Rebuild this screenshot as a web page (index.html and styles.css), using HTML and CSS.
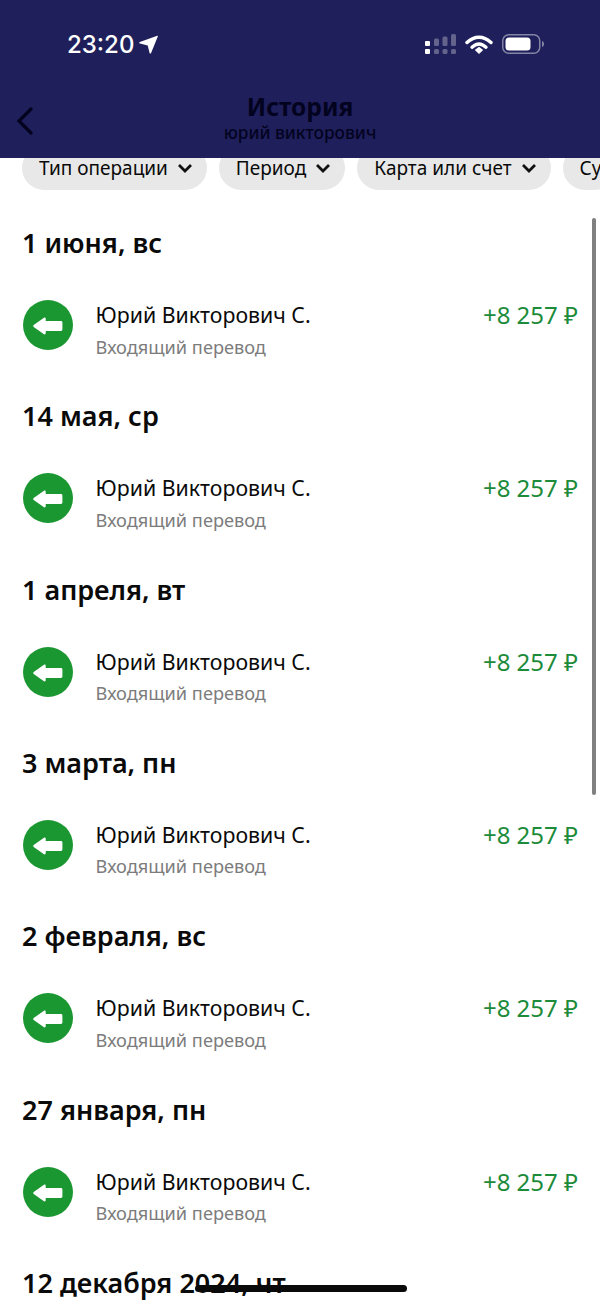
FILE: index.html
```html
<!DOCTYPE html>
<html lang="ru">
<head>
    <meta charset="UTF-8">
    <meta name="viewport" content="width=device-width, initial-scale=1.0">
    <title>История</title>
    <link rel="stylesheet" href="styles.css">
</head>
<body>
    <svg class="sprite" width="0" height="0">
        <symbol id="income" viewBox="0 0 50 50">
            <circle cx="25" cy="25" r="25" fill="#1b9732"/>
            <path d="M11 24.700 21 17.800c.8-.5 1.700 0 1.700.9v2.300h15.300c.8 0 1.400.6 1.400 1.400v7.200c0 .8-.6 1.400-1.400 1.400H22.700v2.300c0 .9-.9 1.400-1.700.9L11 27.300c-1-.7-1-1.900 0-2.600z" fill="#fff"/>
        </symbol>
        <symbol id="chevron" viewBox="0 0 14 9">
            <path d="m1 1 6 6 6-6" fill="none" stroke="#111" stroke-width="2.800"/>
        </symbol>
    </svg>
    <header class="top">
        <div class="status">
            <div class="clock">
                <span>23:20</span>
                <svg width="19" height="19" viewBox="0 0 19 19"><path d="M18.300.8c.4-.2.700.1.600.5L12.100 18c-.3.700-1.300.7-1.500 0L8.700 10.400.9 8.500C.1 8.300 0 7.300.8 7z" fill="#fff"/></svg>
            </div>
            <div class="status-icons">
                <svg width="31" height="21" viewBox="0 0 31 21">
                    <g fill="#fff">
                        <rect x="0" y="7" width="5" height="5" rx="1"/>
                        <rect x="0" y="15" width="5" height="5" rx="1"/>
                    </g>
                    <g fill="#fff" opacity=".3">
                        <rect x="9" y="4.500" width="5" height="7.500" rx="1.500"/>
                        <rect x="17.500" y="2.500" width="5" height="9.500" rx="1.500"/>
                        <rect x="26" y="0" width="5" height="12" rx="1.500"/>
                        <rect x="9" y="15" width="5" height="5" rx="1.500"/>
                        <rect x="17.500" y="15" width="5" height="5" rx="1.500"/>
                        <rect x="26" y="15" width="5" height="5" rx="1.500"/>
                    </g>
                </svg>
                <svg width="28" height="20" viewBox="0 0 28 20">
                    <path d="M2 8.500C9.500 1.500 18.500 1.500 26 8.500" fill="none" stroke="#fff" stroke-width="3.400" stroke-linecap="round"/>
                    <path d="M7 13.200C11.500 9 16.500 9 21 13.200" fill="none" stroke="#fff" stroke-width="3.400" stroke-linecap="round"/>
                    <path d="M9.800 16 14 12.800 18.200 16 14 20z" fill="#fff"/>
                </svg>
                <svg width="42" height="20" viewBox="0 0 42 20">
                    <rect x=".75" y=".75" width="37" height="18.500" rx="6" fill="none" stroke="#fff" stroke-opacity=".45" stroke-width="1.500"/>
                    <rect x="3.500" y="3.500" width="25" height="13" rx="3.500" fill="#fff"/>
                    <path d="M40 7c1.300.4 2 1.500 2 3s-.7 2.600-2 3z" fill="#fff" fill-opacity=".45"/>
                </svg>
            </div>
        </div>
        <div class="nav">
            <svg class="back" width="17" height="28" viewBox="0 0 17 28"><path d="M15 2 3 14l12 12" fill="none" stroke="#03031f" stroke-width="3.200" stroke-linecap="round"/></svg>
            <h1>История</h1>
            <p>юрий викторович</p>
        </div>
    </header>

    <div class="chips">
        <div class="chip">Тип операции <svg width="14" height="9"><use href="#chevron"/></svg></div>
        <div class="chip">Период <svg width="14" height="9"><use href="#chevron"/></svg></div>
        <div class="chip">Карта или счет <svg width="14" height="9"><use href="#chevron"/></svg></div>
        <div class="chip">Су</div>
    </div>

    <main class="list">
        <section class="day">
            <h2>1 июня, вс</h2>
            <div class="op">
                <svg class="op-icon" width="50" height="50"><use href="#income"/></svg>
                <div class="op-text"><div class="op-name">Юрий Викторович С.</div><div class="op-type">Входящий перевод</div></div>
                <div class="op-sum">+8 257 ₽</div>
            </div>
        </section>
        <section class="day">
            <h2>14 мая, ср</h2>
            <div class="op">
                <svg class="op-icon" width="50" height="50"><use href="#income"/></svg>
                <div class="op-text"><div class="op-name">Юрий Викторович С.</div><div class="op-type">Входящий перевод</div></div>
                <div class="op-sum">+8 257 ₽</div>
            </div>
        </section>
        <section class="day">
            <h2>1 апреля, вт</h2>
            <div class="op">
                <svg class="op-icon" width="50" height="50"><use href="#income"/></svg>
                <div class="op-text"><div class="op-name">Юрий Викторович С.</div><div class="op-type">Входящий перевод</div></div>
                <div class="op-sum">+8 257 ₽</div>
            </div>
        </section>
        <section class="day">
            <h2>3 марта, пн</h2>
            <div class="op">
                <svg class="op-icon" width="50" height="50"><use href="#income"/></svg>
                <div class="op-text"><div class="op-name">Юрий Викторович С.</div><div class="op-type">Входящий перевод</div></div>
                <div class="op-sum">+8 257 ₽</div>
            </div>
        </section>
        <section class="day">
            <h2>2 февраля, вс</h2>
            <div class="op">
                <svg class="op-icon" width="50" height="50"><use href="#income"/></svg>
                <div class="op-text"><div class="op-name">Юрий Викторович С.</div><div class="op-type">Входящий перевод</div></div>
                <div class="op-sum">+8 257 ₽</div>
            </div>
        </section>
        <section class="day">
            <h2>27 января, пн</h2>
            <div class="op">
                <svg class="op-icon" width="50" height="50"><use href="#income"/></svg>
                <div class="op-text"><div class="op-name">Юрий Викторович С.</div><div class="op-type">Входящий перевод</div></div>
                <div class="op-sum">+8 257 ₽</div>
            </div>
        </section>
        <section class="day day-last">
            <h2>12 декабря 2024, чт</h2>
        </section>
    </main>

    <div class="scrollbar"></div>
    <div class="home-bar"></div>
</body>
</html>
```

FILE: styles.css
```css
html, body {
    height: 100%;
}
body {
    margin: 0;
    overflow: hidden;
    background-color: #fff;
    color: #0a0a0a;
    font-family: "Noto Sans", "Open Sans", sans-serif;
}
.sprite {
    display: block;
    height: 0;
}
.top {
    position: relative;
    z-index: 1;
    height: 158px;
    background-color: #1f1f5b;
}
.status {
    display: flex;
    justify-content: space-between;
    align-items: center;
    height: 30px;
    padding: 29px 56px 0 67px;
}
.clock {
    display: flex;
    align-items: center;
    gap: 5px;
    color: #fff;
    font-family: Inter, sans-serif;
    font-size: 24px;
    font-weight: 500;
}
.status-icons {
    display: flex;
    align-items: center;
    gap: 9px;
}
.nav {
    position: relative;
    padding-top: 34px;
    text-align: center;
    color: #03031f;
}
.nav h1 {
    margin: 0;
    font-size: 24.500px;
    line-height: 28px;
    font-weight: 700;
}
.nav p {
    margin: 0;
    font-size: 17.300px;
    line-height: 24px;
    font-weight: 500;
}
.back {
    position: absolute;
    left: 16px;
    top: 48px;
}
.chips {
    display: flex;
    gap: 12px;
    margin-top: -12px;
    padding-left: 22px;
}
.chip {
    display: flex;
    flex: none;
    align-items: center;
    gap: 10px;
    box-sizing: border-box;
    height: 44px;
    padding: 0 15px 0 17px;
    border-radius: 22px;
    background-color: #e8e8e8;
    font-size: 19px;
    white-space: nowrap;
}
.list {
    padding: 0 22px 0 22.500px;
}
.day {
    height: 173.330px;
}
.day-last {
    height: 80px;
}
.day h2 {
    margin: 0 0 0 -0.500px;
    padding-top: 35px;
    font-size: 27px;
    line-height: 36px;
    font-weight: 600;
}
.op {
    display: flex;
    align-items: flex-start;
    margin-top: 39px;
}
.op-icon {
    flex: none;
    margin-right: 23px;
}
.op-text {
    flex: 1;
    padding-top: 1px;
}
.op-name {
    font-size: 21.300px;
    line-height: 28px;
}
.op-type {
    margin-top: 4.500px;
    color: #7c7c7c;
    font-size: 18.200px;
    line-height: 26px;
}
.op-sum {
    color: #1c8b3a;
    font-size: 24px;
    line-height: 30px;
}
.scrollbar {
    position: absolute;
    left: 592px;
    top: 218px;
    width: 4px;
    height: 577px;
    border-radius: 2px;
    background-color: #808080;
}
.home-bar {
    position: absolute;
    left: 195px;
    top: 1285px;
    width: 212px;
    height: 7px;
    border-radius: 4px;
    background-color: #0a0a0a;
}
```
